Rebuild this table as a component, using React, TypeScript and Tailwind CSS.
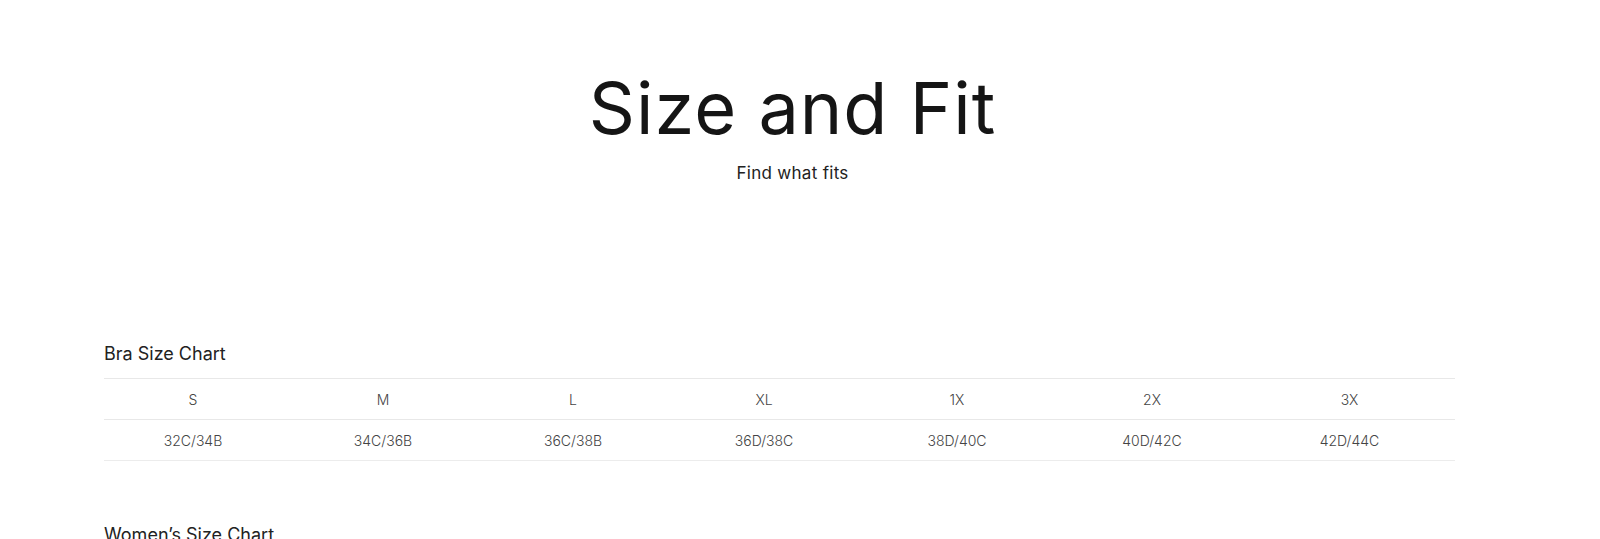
import React from "react";

const sizes = ["S", "M", "L", "XL", "1X", "2X", "3X"];
const bra = ["32C/34B", "34C/36B", "36C/38B", "36D/38C", "38D/40C", "40D/42C", "42D/44C"];
const widths = ["w-[190px]", "w-[190px]", "w-[190px]", "w-[192px]", "w-[194px]", "w-[196px]", "w-[199px]"];

export default function App() {
  return (
    <div className="min-h-[539px] bg-white pr-[15px] font-['Inter','Liberation_Sans',sans-serif] text-[#111]">
      <div className="flex flex-col items-center pt-[72px]">
        <h1 className="text-[72px] leading-[72px] font-normal tracking-[1px] text-[#151515]">Size and Fit</h1>
        <p className="mt-[17px] text-[17px] leading-[25px] tracking-[0.3px] text-[#222]">Find what fits</p>
      </div>
      <div className="px-[104px] pt-[154px]">
        <h2 className="text-[18px] leading-[28px] text-[#222]">Bra Size Chart</h2>
        <table className="mt-[10px] w-[1351px] table-fixed border-collapse text-[14px] font-light text-[#444]">
          <colgroup>
            {widths.map((w, i) => (
              <col key={i} className={w} />
            ))}
          </colgroup>
          <tbody>
            <tr className="h-[41px] border-y border-[#e8e8e8]">
              {sizes.map((s) => (
                <td key={s} className="pr-[12px] text-center">{s}</td>
              ))}
            </tr>
            <tr className="h-[41px] border-b border-[#ececec]">
              {bra.map((s) => (
                <td key={s} className="pr-[12px] text-center">{s}</td>
              ))}
            </tr>
          </tbody>
        </table>
        <h2 className="mt-[60px] text-[18px] leading-[28px] text-[#222]">Women’s Size Chart</h2>
      </div>
    </div>
  );
}
